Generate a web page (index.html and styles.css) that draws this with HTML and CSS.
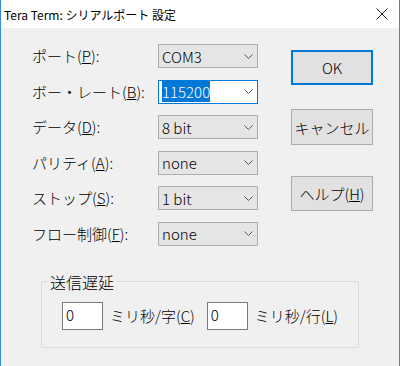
FILE: index.html
```html
<!DOCTYPE html>
<html lang="ja">
<head>
    <meta charset="UTF-8">
    <title>Tera Term: シリアルポート 設定</title>
    <link rel="stylesheet" href="styles.css">
</head>
<body>
    <div class="window">
        <div class="titlebar">
            <span class="title">Tera Term: シリアルポート 設定</span>
            <svg class="close" width="12" height="12" viewBox="0 0 12 12">
                <path d="M0.5 0.5 L11.5 11.5 M11.5 0.5 L0.5 11.5" stroke="#222" stroke-width="1" fill="none"/>
            </svg>
        </div>
        <div class="dialog">
            <div class="top">
                <div class="form">
                    <label>ポート(<u>P</u>):</label>
                    <div class="combo"><span>COM3</span><svg class="chev" width="9" height="5" viewBox="0 0 9 5"><path d="M0.5 0.5 L4.5 4.5 L8.5 0.5" stroke="#555" fill="none"/></svg></div>

                    <label>ボー・レート(<u>B</u>):</label>
                    <div class="combo focus"><span class="sel">115200</span><svg class="chev" width="9" height="5" viewBox="0 0 9 5"><path d="M0.5 0.5 L4.5 4.5 L8.5 0.5" stroke="#555" fill="none"/></svg></div>

                    <label>データ(<u>D</u>):</label>
                    <div class="combo"><span>8 bit</span><svg class="chev" width="9" height="5" viewBox="0 0 9 5"><path d="M0.5 0.5 L4.5 4.5 L8.5 0.5" stroke="#555" fill="none"/></svg></div>

                    <label>パリティ(<u>A</u>):</label>
                    <div class="combo"><span>none</span><svg class="chev" width="9" height="5" viewBox="0 0 9 5"><path d="M0.5 0.5 L4.5 4.5 L8.5 0.5" stroke="#555" fill="none"/></svg></div>

                    <label>ストップ(<u>S</u>):</label>
                    <div class="combo"><span>1 bit</span><svg class="chev" width="9" height="5" viewBox="0 0 9 5"><path d="M0.5 0.5 L4.5 4.5 L8.5 0.5" stroke="#555" fill="none"/></svg></div>

                    <label>フロー制御(<u>F</u>):</label>
                    <div class="combo"><span>none</span><svg class="chev" width="9" height="5" viewBox="0 0 9 5"><path d="M0.5 0.5 L4.5 4.5 L8.5 0.5" stroke="#555" fill="none"/></svg></div>
                </div>
                <div class="buttons">
                    <button class="btn ok">OK</button>
                    <button class="btn cancel">キャンセル</button>
                    <button class="btn help">ヘルプ(<u>H</u>)</button>
                </div>
            </div>
            <fieldset class="group">
                <legend>送信遅延</legend>
                <div class="row">
                    <div class="edit">0</div>
                    <span class="unit">ミリ秒/字(<u>C</u>)</span>
                    <div class="edit second">0</div>
                    <span class="unit">ミリ秒/行(<u>L</u>)</span>
                </div>
            </fieldset>
        </div>
    </div>
</body>
</html>
```

FILE: styles.css
```css
body {
    margin: 0;
    font-family: "Noto Sans CJK JP", sans-serif;
    font-size: 15px;
    font-weight: 300;
    color: #000;
}
.window {
    width: 400px;
    height: 366px;
    box-sizing: border-box;
    border-left: 1px solid #3b8ad8;
    border-right: 1px solid #3b8ad8;
    background: #f0f0f0;
}
.titlebar {
    height: 28px;
    background: #fff;
    display: flex;
    align-items: center;
    padding-left: 3px;
}
.title {
    font-size: 12px;
    font-weight: 400;
}
.close {
    margin-left: auto;
    margin-right: 11px;
}
.dialog {
    padding: 16px 0 0 31px;
}
.top {
    display: flex;
}
.form {
    display: grid;
    grid-template-columns: 126px 100px;
    row-gap: 11.6px;
    align-items: center;
}
.form label {
    line-height: 24px;
}
.combo {
    height: 24px;
    box-sizing: border-box;
    border: 1px solid #adadad;
    background: #e5e5e5;
    display: flex;
    align-items: center;
    padding-left: 3px;
}
.combo.focus {
    background: #fff;
    border-color: #0078d7;
}
.sel {
    background: #0078d7;
    color: #fff;
}
.chev {
    margin-left: auto;
    margin-right: 4px;
}
.buttons {
    display: flex;
    flex-direction: column;
    margin-left: 33px;
}
.btn {
    width: 82px;
    height: 35px;
    box-sizing: border-box;
    border: 1px solid #adadad;
    background: #e1e1e1;
    font-family: inherit;
    font-size: 15px;
    font-weight: 300;
    color: #000;
    padding: 0;
}
.ok {
    margin-top: 6px;
    border: 2px solid #0078d7;
}
.cancel {
    margin-top: 24px;
    height: 36px;
}
.help {
    margin-top: 31px;
}
.group {
    margin: 26px 0 0 9px;
    width: 318px;
    height: 76px;
    box-sizing: border-box;
    border: 1px solid #dcdcdc;
    padding: 0;
}
.group legend {
    font-size: 16px;
    line-height: 20px;
    margin-left: 6px;
    padding: 0 2px;
}
.row {
    display: flex;
    align-items: center;
    padding: 10px 0 0 20px;
}
.edit {
    width: 41px;
    height: 28px;
    box-sizing: border-box;
    border: 1px solid #7a7a7a;
    background: #fff;
    padding-left: 3px;
    line-height: 24px;
}
.edit.second {
    margin-left: 12px;
}
.unit {
    margin-left: 7px;
}
```
